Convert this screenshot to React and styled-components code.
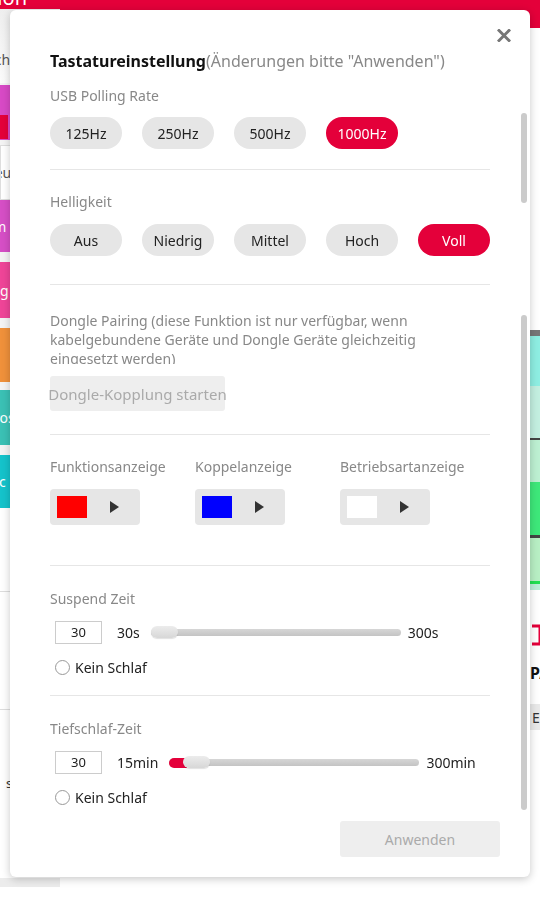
import React from "react";
import styled, { createGlobalStyle } from "styled-components";

const RED = "#e4003a";

const GlobalStyle = createGlobalStyle`
    html, body {
        margin: 0;
        padding: 0;
        background: #fff;
        font-family: "Noto Sans", "Open Sans", Arial, sans-serif;
    }
    * { box-sizing: border-box; }
`;

// ---------- page behind the dialog ----------

const Page = styled.div`
    height: 100vh;
    display: flex;
    flex-direction: column;
    overflow: hidden;
`;

const AppHeader = styled.div`
    height: 28px;
    flex: 0 0 28px;
    background: ${RED};
    display: flex;
    justify-content: flex-end;
    width: 27px;
    overflow: hidden;
    white-space: nowrap;
`;

const HeaderBand = styled.div`
    height: 28px;
    background: ${RED};
    overflow: hidden;
`;

const HeaderTitle = styled.div`
    color: #fff;
    font-size: 20px;
    line-height: 20px;
    margin-top: -12px;
`;

const Workspace = styled.div`
    flex: 1;
    display: flex;
`;

const Sidebar = styled.div`
    width: 60px;
    margin-top: -19px;
    position: relative;
    background: #f4f4f4;
    display: flex;
    flex-direction: column;
`;

const Tile = styled.div`
    height: ${({ $h }) => $h}px;
    margin-bottom: ${({ $gap }) => $gap}px;
    background: ${({ $bg }) => $bg};
    color: ${({ $fg }) => $fg};
    border: ${({ $border }) => ($border ? "1px solid #ddd" : "none")};
    display: flex;
    align-items: center;
    overflow: hidden;
    white-space: nowrap;
    font-size: 14px;
`;

const TileText = styled.span`
    margin-left: ${({ $shift }) => $shift}px;
    margin-top: ${({ $dy }) => $dy || 0}px;
`;

const TileBadge = styled.div`
    width: 8px;
    height: 24px;
    margin-top: 28px;
    background: ${RED};
`;

const SideRest = styled.div`
    flex: 1;
    background: #fff;
    display: flex;
    flex-direction: column;
`;

const SideLine = styled.div`
    height: 1px;
    background: #ddd;
    margin-top: ${({ $mt }) => $mt}px;
`;

const SideText = styled.div`
    font-size: 13px;
    color: #333;
    margin-top: 64px;
    margin-left: 6px;
`;

const SideFoot = styled.div`
    height: 9px;
    background: #ececec;
    margin-top: auto;
    margin-bottom: 13px;
`;

const MainArea = styled.div`
    flex: 1;
    display: flex;
    justify-content: flex-end;
`;

const RightPane = styled.div`
    width: 30px;
    padding-left: 20px;
    padding-top: 302px;
    display: flex;
    flex-direction: column;
    overflow: hidden;
`;

const KeyboardPic = styled.div`
    height: 260px;
    display: flex;
    flex-direction: column;
    border-top: 6px solid #777;
    background: #bdeed9;
`;

const KeyBlock = styled.div`
    height: ${({ $h }) => $h}px;
    background: ${({ $bg }) => $bg};
    border-bottom: ${({ $line }) => $line || "none"};
`;

const LogoMark = styled.svg`
    margin-top: 34px;
    display: block;
`;

const PaText = styled.div`
    margin-top: 16px;
    font-weight: 700;
    font-size: 16px;
    color: #111;
    white-space: nowrap;
`;

const SmallBtn = styled.div`
    margin-top: 20px;
    height: 26px;
    width: 40px;
    background: #e9e9e9;
    font-size: 14px;
    color: #333;
    display: flex;
    align-items: center;
    padding-left: 2px;
`;

// ---------- dialog ----------

const Dialog = styled.div`
    position: fixed;
    top: 10px;
    left: 10px;
    width: 520px;
    height: 867px;
    background: #fff;
    border-radius: 6px;
    box-shadow: 0 2px 8px rgba(0, 0, 0, 0.22);
    display: flex;
    flex-direction: column;
    overflow: hidden;
`;

const CloseButton = styled.button`
    position: absolute;
    top: 16px;
    right: 17px;
    width: 18px;
    height: 18px;
    padding: 0;
    border: none;
    background: transparent;
    cursor: pointer;
    display: flex;
    align-items: center;
    justify-content: center;
`;

const ScrollThumb = styled.div`
    position: absolute;
    right: 3px;
    width: 6px;
    border-radius: 3px;
    background: #cbcbcb;
    top: ${({ $top }) => $top}px;
    height: ${({ $h }) => $h}px;
`;

const Body = styled.div`
    flex: 1;
    overflow: hidden;
    padding: 39px 40px 0;
`;

const Title = styled.div`
    font-size: 16px;
    line-height: 24px;
    color: #111;
    font-weight: 700;
    white-space: nowrap;
`;

const TitleHint = styled.span`
    font-weight: 400;
    color: #888;
`;

const Section = styled.div`
    padding-top: ${({ $pt }) => $pt}px;
    padding-bottom: ${({ $pb }) => $pb}px;
    border-bottom: ${({ $last }) => ($last ? "none" : "1px solid #e6e6e6")};
`;

const Label = styled.div`
    font-size: 14px;
    line-height: 20px;
    color: #888;
    margin-bottom: ${({ $mb }) => $mb ?? 12}px;
`;

const PillRow = styled.div`
    display: flex;
    gap: 20px;
`;

const Pill = styled.div`
    width: 72px;
    height: 32px;
    border-radius: 16px;
    background: ${({ $active }) => ($active ? RED : "#e6e6e6")};
    color: ${({ $active }) => ($active ? "#fff" : "#222")};
    font-size: 14px;
    display: flex;
    align-items: center;
    justify-content: center;
`;

const Notice = styled.div`
    font-size: 14px;
    line-height: 19px;
    color: #888;
    height: 53px;
    overflow: hidden;
    padding-right: 20px;
`;

const GhostButton = styled.div`
    display: inline-flex;
    align-items: center;
    justify-content: center;
    height: ${({ $h }) => $h}px;
    width: ${({ $w }) => $w}px;
    background: #eeeeee;
    color: #aaa;
    font-size: ${({ $fs }) => $fs || 14}px;
    border-radius: 3px;
    white-space: nowrap;
`;

const PairButton = styled(GhostButton)`
    margin-top: 12px;
`;

const IndicatorGrid = styled.div`
    display: grid;
    grid-template-columns: 145px 145px 145px;
`;

const ColorPicker = styled.div`
    width: 90px;
    height: 36px;
    border-radius: 4px;
    background: #e6e6e6;
    display: flex;
    align-items: center;
    padding-left: 7px;
`;

const Swatch = styled.div`
    width: 30px;
    height: 22px;
    background: ${({ $color }) => $color};
`;

const PlayMark = styled.div`
    margin-left: 23px;
    width: 0;
    height: 0;
    border-top: 6px solid transparent;
    border-bottom: 6px solid transparent;
    border-left: 9px solid #333;
`;

const SliderRow = styled.div`
    display: flex;
    align-items: center;
    height: 24px;
    padding-left: 5px;
    margin-bottom: 13px;
`;

const NumberBox = styled.input`
    width: 47px;
    height: 23px;
    border: 1px solid #ccc;
    font-family: inherit;
    font-size: 13px;
    color: #222;
    text-align: center;
    padding: 0;
    margin-right: 15px;
    outline: none;
`;

const RangeText = styled.span`
    font-size: 14px;
    color: #222;
    margin-right: ${({ $mr }) => $mr || 0}px;
`;

const Track = styled.div`
    position: relative;
    width: 250px;
    height: 7px;
    border-radius: 4px;
    background: linear-gradient(#d6d6d6, #c4c4c4);
    margin-right: 7px;
`;

const TrackFill = styled.div`
    position: absolute;
    left: 0;
    top: -1px;
    height: 10px;
    border-radius: 5px 0 0 5px;
    background: ${RED};
`;

const Thumb = styled.div`
    position: absolute;
    top: -3px;
    width: 27px;
    height: 12px;
    border-radius: 6px;
    background: linear-gradient(#ececec, #d7d7d7);
    box-shadow: 0 1px 1px rgba(0, 0, 0, 0.12);
`;

const RadioRow = styled.label`
    display: flex;
    align-items: center;
    height: 20px;
    padding-left: 5px;
    font-size: 14px;
    color: #222;
`;

const RadioCircle = styled.span`
    width: 15px;
    height: 15px;
    border-radius: 50%;
    border: 1px solid #999;
    margin-right: 5px;
`;

const Footer = styled.div`
    display: flex;
    justify-content: flex-end;
    padding: 0 30px 20px;
`;

const sidebarTiles = [
    { h: 74, gap: 2, bg: "linear-gradient(#eeeeee, #fbfbfb)", fg: "#555", text: "Übersicht", shift: -48, dy: 26 },
    { h: 55, gap: 5, bg: "#d84ac6", fg: "#fff", badge: true },
    { h: 55, gap: 0, bg: "#fff", fg: "#555", text: "Neu", shift: -17, border: true },
    { h: 52, gap: 10, bg: "#d64fc6", fg: "#fff", text: "Anim", shift: -28 },
    { h: 56, gap: 10, bg: "#ef4598", fg: "#fff", text: "Beleuchtung", shift: -75 },
    { h: 54, gap: 8, bg: "#f0913b", fg: "#fff", text: "" },
    { h: 55, gap: 10, bg: "#3bc1b5", fg: "#fff", text: "Makros", shift: -34 },
    { h: 53, gap: 0, bg: "#15c3cb", fg: "#fff", text: "Misc", shift: -24 },
];

function Slider({ min, max, value, minText, maxText }) {
    const pct = ((value - min) / (max - min)) * 100;
    return (
        <SliderRow>
            <NumberBox defaultValue={value} />
            <RangeText $mr={11}>{minText}</RangeText>
            <Track>
                {pct > 0 && <TrackFill style={{ width: `calc(${pct}% + 4px)` }} />}
                <Thumb style={{ left: `${pct}%` }} />
            </Track>
            <RangeText>{maxText}</RangeText>
        </SliderRow>
    );
}

function Radio({ children }) {
    return (
        <RadioRow>
            <RadioCircle />
            {children}
        </RadioRow>
    );
}

export default function App() {
    const rates = ["125Hz", "250Hz", "500Hz", "1000Hz"];
    const levels = ["Aus", "Niedrig", "Mittel", "Hoch", "Voll"];
    const indicators = [
        { name: "Funktionsanzeige", color: "#ff0000" },
        { name: "Koppelanzeige", color: "#0000ff" },
        { name: "Betriebsartanzeige", color: "#ffffff" },
    ];

    return (
        <>
            <GlobalStyle />
            <Page>
                <HeaderBand>
                    <AppHeader>
                        <HeaderTitle>Konfiguration</HeaderTitle>
                    </AppHeader>
                </HeaderBand>
                <Workspace>
                    <Sidebar>
                        {sidebarTiles.map((t, i) => (
                            <Tile key={i} $h={t.h} $gap={t.gap} $bg={t.bg} $fg={t.fg} $border={t.border}>
                                {t.badge ? <TileBadge /> : <TileText $shift={t.shift} $dy={t.dy}>{t.text}</TileText>}
                            </Tile>
                        ))}
                        <SideRest>
                            <SideLine $mt={83} />
                            <SideLine $mt={117} />
                            <SideText>s</SideText>
                            <SideFoot />
                        </SideRest>
                    </Sidebar>
                    <MainArea>
                        <RightPane>
                            <KeyboardPic>
                                <KeyBlock $h={50} $bg="#8eeee2" />
                                <KeyBlock $h={54} $bg="#c3efe0" $line="2px solid #444" />
                                <KeyBlock $h={42} $bg="#bdf0d2" />
                                <KeyBlock $h={56} $bg="#3ee87a" $line="3px solid #444" />
                                <KeyBlock $h={46} $bg="#b8efc4" $line="3px solid #22e052" />
                            </KeyboardPic>
                            <LogoMark width="14" height="22" viewBox="0 0 14 22">
                                <path d="M2 2h8v18H2" fill="none" stroke={RED} strokeWidth="3" />
                            </LogoMark>
                            <PaText>PA</PaText>
                            <SmallBtn>E</SmallBtn>
                        </RightPane>
                    </MainArea>
                </Workspace>
            </Page>

            <Dialog>
                <CloseButton aria-label="Schließen">
                    <svg width="14" height="13" viewBox="0 0 14 13">
                        <path d="M2 1.5l10 10M12 1.5l-10 10" stroke="#777" strokeWidth="3" strokeLinecap="square" />
                    </svg>
                </CloseButton>
                <ScrollThumb $top={103} $h={90} />
                <ScrollThumb $top={305} $h={495} />

                <Body>
                    <Title>
                        Tastatureinstellung<TitleHint>(Änderungen bitte "Anwenden")</TitleHint>
                    </Title>

                    <Section $pt={13} $pb={20}>
                        <Label $mb={11}>USB Polling Rate</Label>
                        <PillRow>
                            {rates.map((r) => (
                                <Pill key={r} $active={r === "1000Hz"}>{r}</Pill>
                            ))}
                        </PillRow>
                    </Section>

                    <Section $pt={22} $pb={28}>
                        <Label>Helligkeit</Label>
                        <PillRow>
                            {levels.map((l) => (
                                <Pill key={l} $active={l === "Voll"}>{l}</Pill>
                            ))}
                        </PillRow>
                    </Section>

                    <Section $pt={26} $pb={23}>
                        <Notice>
                            Dongle Pairing (diese Funktion ist nur verfügbar, wenn kabelgebundene Geräte und Dongle Geräte gleichzeitig eingesetzt werden)
                        </Notice>
                        <PairButton $w={175} $h={35} $fs={15}>Dongle-Kopplung starten</PairButton>
                    </Section>

                    <Section $pt={22} $pb={40}>
                        <IndicatorGrid>
                            {indicators.map((ind) => (
                                <div key={ind.name}>
                                    <Label>{ind.name}</Label>
                                    <ColorPicker>
                                        <Swatch $color={ind.color} />
                                        <PlayMark />
                                    </ColorPicker>
                                </div>
                            ))}
                        </IndicatorGrid>
                    </Section>

                    <Section $pt={23} $pb={18}>
                        <Label $mb={11}>Suspend Zeit</Label>
                        <Slider min={30} max={300} value={30} minText="30s" maxText="300s" />
                        <Radio>Kein Schlaf</Radio>
                    </Section>

                    <Section $pt={23} $pb={0} $last>
                        <Label $mb={11}>Tiefschlaf-Zeit</Label>
                        <Slider min={15} max={300} value={30} minText="15min" maxText="300min" />
                        <Radio>Kein Schlaf</Radio>
                    </Section>
                </Body>

                <Footer>
                    <GhostButton $w={160} $h={36}>Anwenden</GhostButton>
                </Footer>
            </Dialog>
        </>
    );
}
